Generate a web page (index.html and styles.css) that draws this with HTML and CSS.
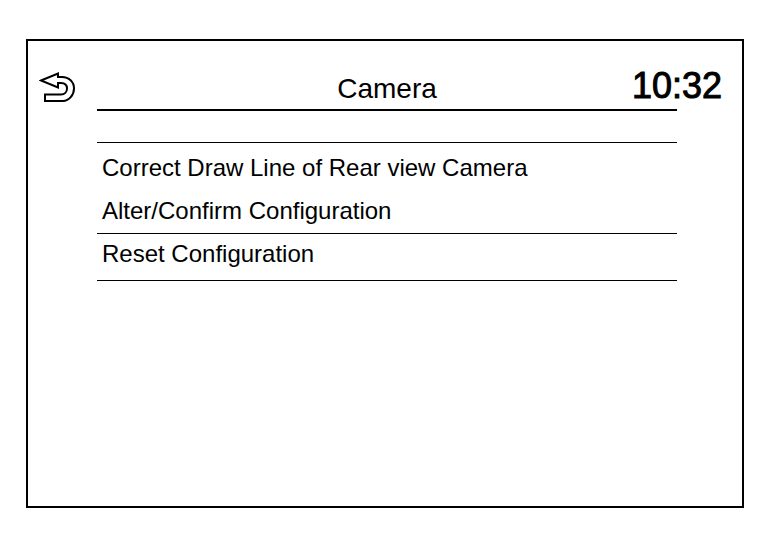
FILE: index.html
```html
<!DOCTYPE html>
<html lang="en">
<head>
    <meta charset="UTF-8">
    <title>Camera</title>
    <link rel="stylesheet" href="styles.css">
</head>
<body>
    <main class="screen">
        <header class="header">
            <button type="button" class="back" aria-label="Back">
                <svg class="back-icon" width="38" height="34" viewBox="0 0 38 34">
                    <path d="M2 10.500 L19 3.500 V7 H23 C30 7 35 12 35 18.500 C35 25 30 31 24 31 H6 V24.500 H22 C25.500 24.500 28 22 28 18.500 C28 15 25.500 13 22 13 H19 V17.500 Z"/>
                </svg>
            </button>
            <h1 class="title">Camera</h1>
            <time class="clock">10:32</time>
        </header>

        <div class="menu">
            <div class="group">
                <button type="button" class="item">Correct Draw Line of Rear view Camera</button>
                <button type="button" class="item">Alter/Confirm Configuration</button>
            </div>
            <div class="group">
                <button type="button" class="item">Reset Configuration</button>
            </div>
        </div>
    </main>
</body>
</html>
```

FILE: styles.css
```css
* {
    box-sizing: border-box;
}

body {
    margin: 0;
    padding: 39px 24px 36px 26px;
    min-height: 100vh;
    display: flex;
    background: #fff;
    color: #000;
    font-family: "Liberation Sans", Arial, sans-serif;
}

.screen {
    flex: 1;
    padding-top: 24px;
    border: 2px solid #000;
}

/* the clock shares the title row and runs past the end of its rule */
.header {
    display: grid;
    grid-template-columns: 69px 1fr 65px;
}

.back {
    grid-area: 1 / 1;
    justify-self: start;
    align-self: start;
    margin: 5px 0 0 11px;
    padding: 0;
    border: none;
    background: none;
    cursor: pointer;
}

.back-icon {
    display: block;
    fill: #fff;
    stroke: #000;
    stroke-width: 2;
}

.title {
    grid-area: 1 / 2;
    margin: 0;
    padding: 6px 0 2px;
    border-bottom: 2px solid #000;
    font-size: 28px;
    line-height: 36px;
    font-weight: normal;
    text-align: center;
}

.clock {
    grid-area: 1 / 2 / 2 / 4;
    justify-self: end;
    margin-right: 20px;
    font-size: 36px;
    line-height: 42px;
    -webkit-text-stroke: 1px #000;
}

.menu {
    margin: 31px 65px 0 69px;
    border-top: 1px solid #000;
}

.group {
    display: grid;
    gap: 3px;
    padding-bottom: 2px;
    border-bottom: 1px solid #000;
}

.group:first-child {
    padding-top: 5px;
}

.group:last-child {
    padding-bottom: 6px;
}

.item {
    padding: 0 5px;
    border: none;
    background: none;
    color: inherit;
    font-family: inherit;
    font-size: 24px;
    line-height: 40px;
    text-align: left;
    cursor: pointer;
}
```
